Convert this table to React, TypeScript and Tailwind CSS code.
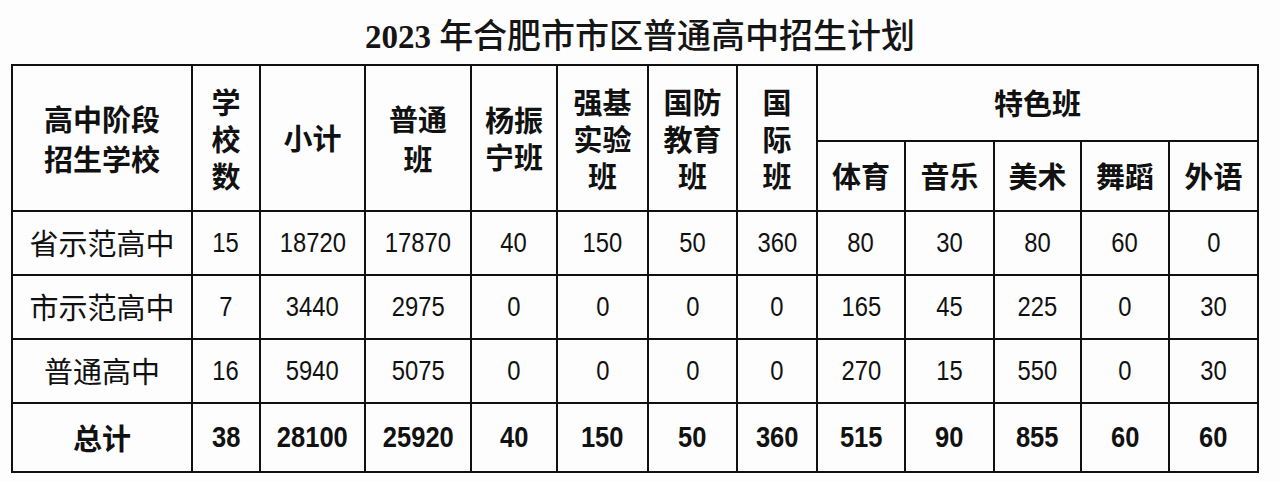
const cols = [180, 68, 105, 106, 86, 91, 89, 80, 88, 89, 87, 88, 89];

type Row = { name: string; values: string[] };

const rows: Row[] = [
  { name: "省示范高中", values: ["15", "18720", "17870", "40", "150", "50", "360", "80", "30", "80", "60", "0"] },
  { name: "市示范高中", values: ["7", "3440", "2975", "0", "0", "0", "0", "165", "45", "225", "0", "30"] },
  { name: "普通高中", values: ["16", "5940", "5075", "0", "0", "0", "0", "270", "15", "550", "0", "30"] }
];

const total: Row = {
  name: "总计",
  values: ["38", "28100", "25920", "40", "150", "50", "360", "515", "90", "855", "60", "60"]
};

const cjk = "font-['Noto_Sans_CJK_SC',sans-serif]";
const num = "font-['Liberation_Sans',sans-serif]";
const cell = "border-2 border-[#111] text-center align-middle p-0";

function HeadLines({ lines, wide }: { lines: string[]; wide?: boolean }) {
  return (
    <div className={wide ? "flex flex-col items-center leading-[40px]" : "flex flex-col items-center leading-[37px]"}>
      {lines.map((line) => (
        <span key={line}>{line}</span>
      ))}
    </div>
  );
}

export default function App() {
  return (
    <div className="h-[482px] w-[1280px] bg-[#fdfdfe] text-[#111]">
      <div className="flex h-[64px] items-center justify-center pt-[6px]">
        <h1 className="leading-none text-[#151515]">
          <span className="font-['Liberation_Serif',serif] text-[33px] font-bold">2023 </span>
          <span className={`${cjk} text-[34px] font-medium`}>年合肥市市区普通高中招生计划</span>
        </h1>
      </div>
      <table className="ml-[11px] w-[1247px] table-fixed border-collapse">
        <colgroup>
          {cols.map((w, i) => (
            <col key={i} style={{ width: w }} />
          ))}
        </colgroup>
        <thead className={`${cjk} text-[29px] font-bold`}>
          <tr className="h-[76px]">
            <th rowSpan={2} className={cell}>
              <HeadLines lines={["高中阶段", "招生学校"]} wide />
            </th>
            <th rowSpan={2} className={cell}>
              <HeadLines lines={["学", "校", "数"]} />
            </th>
            <th rowSpan={2} className={cell}>
              小计
            </th>
            <th rowSpan={2} className={cell}>
              <HeadLines lines={["普通", "班"]} wide />
            </th>
            <th rowSpan={2} className={cell}>
              <HeadLines lines={["杨振", "宁班"]} />
            </th>
            <th rowSpan={2} className={cell}>
              <HeadLines lines={["强基", "实验", "班"]} />
            </th>
            <th rowSpan={2} className={cell}>
              <HeadLines lines={["国防", "教育", "班"]} />
            </th>
            <th rowSpan={2} className={cell}>
              <HeadLines lines={["国", "际", "班"]} />
            </th>
            <th colSpan={5} className={cell}>
              特色班
            </th>
          </tr>
          <tr className="h-[70px]">
            {["体育", "音乐", "美术", "舞蹈", "外语"].map((t) => (
              <th key={t} className={cell}>
                {t}
              </th>
            ))}
          </tr>
        </thead>
        <tbody>
          {rows.map((row) => (
            <tr key={row.name} className="h-[64px]">
              <td className={`${cell} ${cjk} text-[29px]`}>{row.name}</td>
              {row.values.map((v, i) => (
                <td key={i} className={`${cell} ${num} text-[28px]`}>
                  <span className="inline-block scale-x-[0.85]">{v}</span>
                </td>
              ))}
            </tr>
          ))}
          <tr className="h-[69px]">
            <td className={`${cell} ${cjk} text-[29px] font-bold`}>{total.name}</td>
            {total.values.map((v, i) => (
              <td key={i} className={`${cell} ${num} text-[29px] font-bold`}>
                <span className="inline-block scale-x-[0.88]">{v}</span>
              </td>
            ))}
          </tr>
        </tbody>
      </table>
    </div>
  );
}
